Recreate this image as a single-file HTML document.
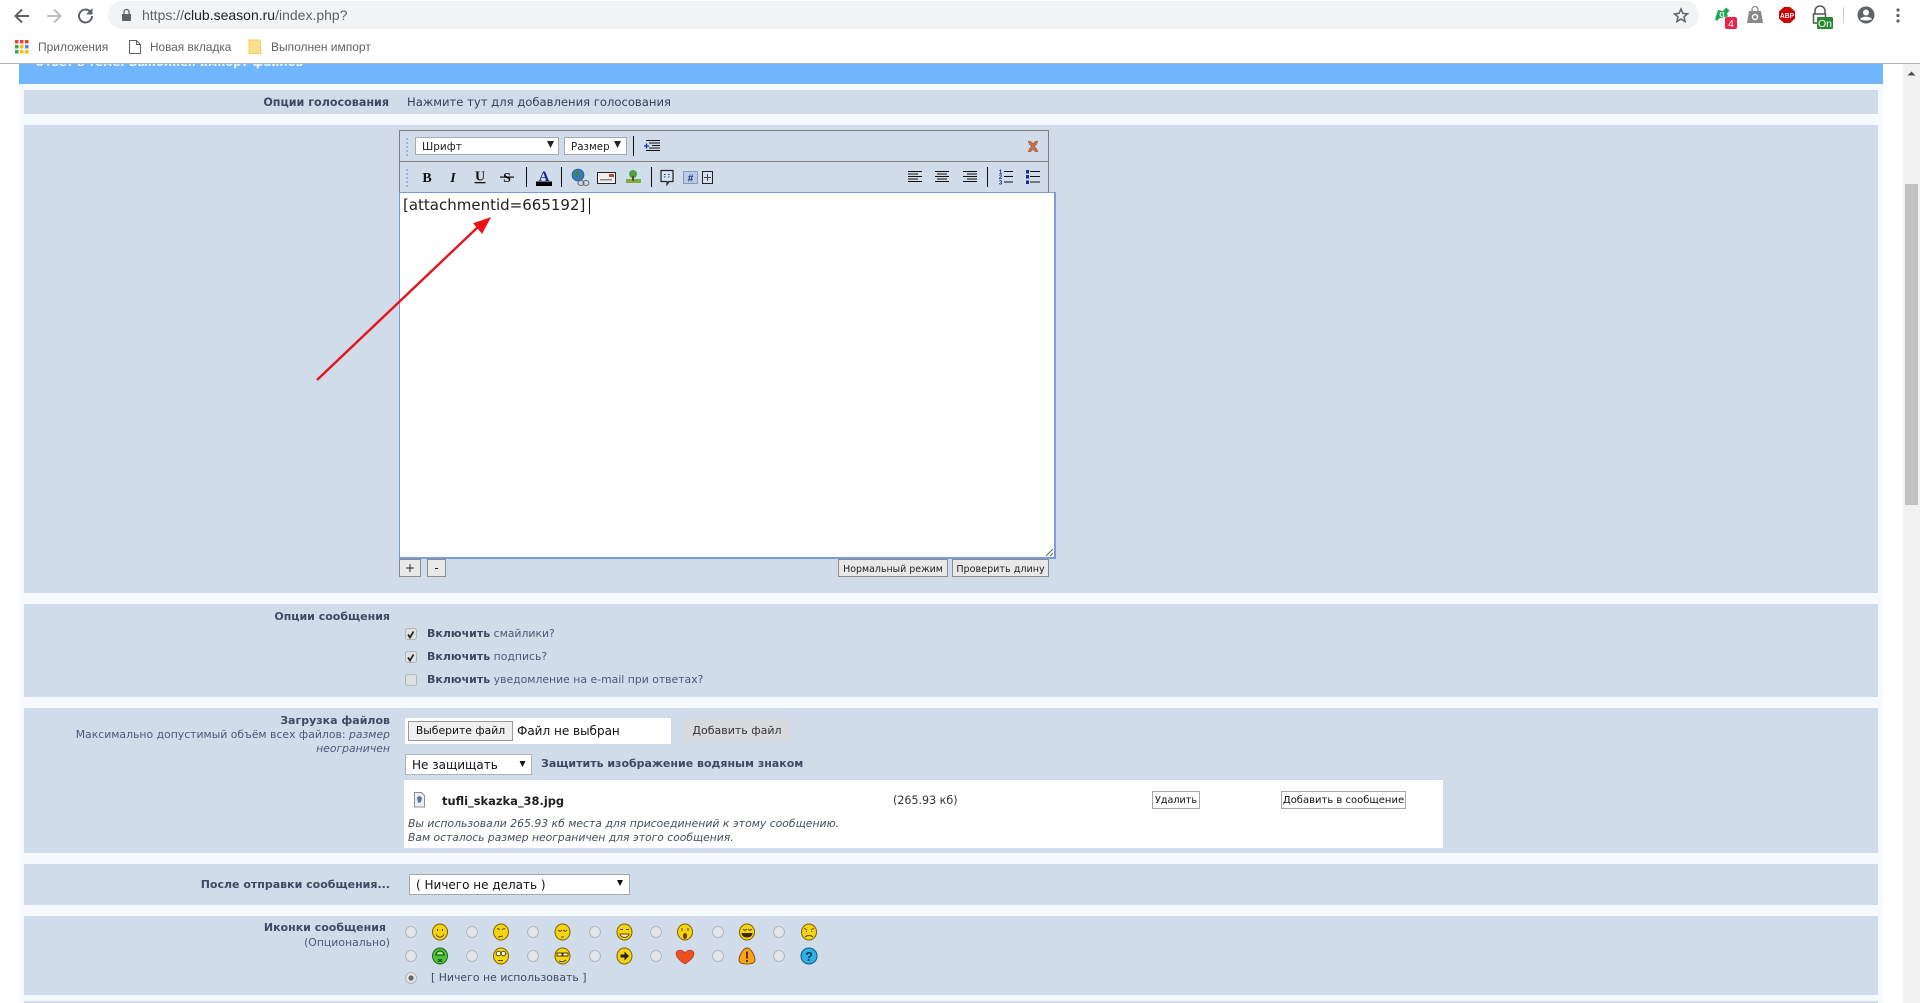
<!DOCTYPE html>
<html lang="ru"><head><meta charset="utf-8"><title>club.season.ru</title>
<style>
html,body{margin:0;padding:0;width:1920px;height:1003px;overflow:hidden;background:#fff}
body{position:relative;font-family:"DejaVu Sans","Liberation Sans",sans-serif;font-size:11px;color:#3d4a63}
.b{position:absolute}
.t{position:absolute;white-space:nowrap;line-height:14px}
.r{right:1530px;text-align:right}
.row{position:absolute;left:24px;width:1854px;background:#d1dcea}
.lb{font-weight:bold;font-size:11px;color:#3d4a63}
.ch{font-family:"Liberation Sans",sans-serif;font-size:12px;color:#5f6368}
.btn{position:absolute;box-sizing:border-box;background:#e8e8e8;border:1px solid #8c8c8c;color:#222;text-align:center;font-size:9.6px;line-height:19px;white-space:nowrap}
.wb{position:absolute;box-sizing:border-box;background:#fff;border:1px solid #a8a8a8;color:#111;text-align:center;font-size:10px;line-height:18px;white-space:nowrap}
.sel{position:absolute;box-sizing:border-box;background:#fff;border:1px solid #a9a9a9;color:#222;white-space:nowrap}
.n{font-size:10.85px;color:#4a5a78}
</style></head><body>

<!-- page background -->
<div class="b" style="left:19px;top:64px;width:1864px;height:939px;background:#f6f9fd"></div>
<div class="b" style="left:19px;top:64px;width:1864px;height:20px;background:#6fb6ff;overflow:hidden">
  <div class="t" style="left:16px;top:-9px;font-weight:bold;font-size:11.5px;color:#e8f3ff">Ответ в теме: Выполнен импорт файлов</div>
</div>

<!-- scrollbar -->
<div class="b" style="left:1903px;top:64px;width:17px;height:939px;background:#f1f1f1"></div>
<div class="b" style="left:1905px;top:184px;width:13px;height:321px;background:#c1c1c1"></div>

<!-- rows -->
<div class="row" style="top:90px;height:24px"></div>
<div class="row" style="top:125px;height:468px"></div>
<div class="row" style="top:604px;height:93px"></div>
<div class="row" style="top:708px;height:145px"></div>
<div class="row" style="top:864px;height:41px"></div>
<div class="row" style="top:916px;height:79px"></div>
<div class="row" style="top:1001px;height:2px"></div>

<!-- chrome -->
<div class="b" style="left:0;top:0;width:1920px;height:63px;background:#fff"></div>
<div class="b" style="left:0;top:63px;width:1920px;height:1px;background:#b4b4b4"></div>
<div class="b" style="left:108px;top:1px;width:1591px;height:28px;border-radius:14px;background:#f1f3f4"></div>
<div class="t" style="left:142px;top:8px;font-family:'Liberation Sans',sans-serif;font-size:14px;color:#5f6368">https://<span style="color:#202124">club.season.ru</span>/index.php?</div>
<div class="t ch" style="left:38px;top:40px">Приложения</div>
<div class="t ch" style="left:150px;top:40px;font-size:11.8px">Новая вкладка</div>
<div class="t ch" style="left:271px;top:40px">Выполнен импорт</div>

<!-- row 1 -->
<div class="t lb" style="right:1531px;top:96px;font-size:11.15px">Опции голосования</div>
<div class="t" style="left:407px;top:95px;font-size:11.6px;color:#34405a">Нажмите тут для добавления голосования</div>

<!-- editor -->
<div class="b" style="left:399px;top:130px;width:648px;height:61px;border:1px solid #808080;border-bottom:0;background:#d1dcea"></div>
<div class="b" style="left:399px;top:161px;width:649px;height:1px;background:#808080"></div>
<div class="sel" style="left:415px;top:137px;width:144px;height:18px;font-size:10.5px;line-height:18px;padding-left:6px">Шрифт</div>
<div class="sel" style="left:564px;top:137px;width:63px;height:18px;font-size:10.3px;line-height:18px;padding-left:6px">Размер</div>
<div class="b" style="left:399px;top:192px;width:657px;height:367px;box-sizing:border-box;background:#fff;border:2px solid #7a9cd6;border-width:1.5px 2px 2px 1.5px"></div>
<div class="t" style="left:403px;top:196px;font-size:15px;line-height:18px;color:#222">[attachmentid=665192]</div>
<div class="b" style="left:589px;top:198px;width:1px;height:16px;background:#111"></div>

<div class="btn" style="left:399px;top:559px;width:22px;height:18px;font-size:12px;line-height:17px">+</div>
<div class="btn" style="left:427px;top:559px;width:19px;height:18px;font-size:12px;line-height:17px">-</div>
<div class="btn" style="left:838px;top:559px;width:110px;height:18px;font-size:9.45px">Нормальный режим</div>
<div class="btn" style="left:952px;top:559px;width:97px;height:18px">Проверить длину</div>

<!-- row 3 -->
<div class="t r lb" style="top:610px">Опции сообщения</div>
<div class="t n" style="left:427px;top:627px"><b style="color:#3d4a63;font-size:11px">Включить</b> смайлики?</div>
<div class="t n" style="left:427px;top:650px"><b style="color:#3d4a63;font-size:11px">Включить</b> подпись?</div>
<div class="t n" style="left:427px;top:673px"><b style="color:#3d4a63;font-size:11px">Включить</b> уведомление на e-mail при ответах?</div>

<!-- row 4 -->
<div class="t r lb" style="top:714px">Загрузка файлов</div>
<div class="t r n" style="top:728px">Максимально допустимый объём всех файлов: <i>размер</i></div>
<div class="t r n" style="top:742px"><i>неограничен</i></div>
<div class="b" style="left:405px;top:718px;width:266px;height:26px;background:#fff"></div>
<div class="btn" style="left:408px;top:721px;width:105px;height:20px;background:#efefef;border-color:#9a9a9a;font-size:10.8px;line-height:18px;color:#111">Выберите файл</div>
<div class="t" style="left:517px;top:724px;font-size:12px;color:#111">Файл не выбран</div>
<div class="b" style="left:684px;top:719px;width:106px;height:23px;background:#d9dade;color:#333;text-align:center;font-size:11px;line-height:24px">Добавить файл</div>
<div class="sel" style="left:405px;top:754px;width:127px;height:21px;font-size:12px;line-height:21px;padding-left:6px;border-color:#b0b4ba;color:#111">Не защищать</div>
<div class="t lb" style="left:541px;top:757px">Защитить изображение водяным знаком</div>
<div class="b" style="left:404px;top:780px;width:1039px;height:68px;background:#fff"></div>
<div class="t" style="left:442px;top:794px;font-weight:bold;font-size:11.45px;color:#222">tufli_skazka_38.jpg</div>
<div class="t" style="left:893px;top:794px;font-size:11.1px;color:#333">(265.93 кб)</div>
<div class="t" style="left:408px;top:817px;font-size:10.84px;font-style:italic;color:#444f60">Вы использовали 265.93 кб места для присоединений к этому сообщению.</div>
<div class="t" style="left:408px;top:831px;font-size:10.75px;font-style:italic;color:#444f60">Вам осталось размер неограничен для этого сообщения.</div>
<div class="wb" style="left:1152px;top:791px;width:48px;height:18px;font-size:9.6px">Удалить</div>
<div class="wb" style="left:1281px;top:791px;width:125px;height:18px">Добавить в сообщение</div>

<!-- row 5 -->
<div class="t r lb" style="top:878px">После отправки сообщения...</div>
<div class="sel" style="left:409px;top:874px;width:221px;height:21px;font-size:12px;line-height:20px;padding-left:6px;color:#111">( Ничего не делать )</div>

<!-- row 6 -->
<div class="t lb" style="right:1534px;top:921px">Иконки сообщения</div>
<div class="t r n" style="top:936px">(Опционально)</div>
<div class="t" style="left:431px;top:971px;font-size:10.9px;color:#3d4a63">[ Ничего не использовать ]</div>

<!-- vector overlay -->
<svg class="b" style="left:0;top:0" width="1920" height="1003" viewBox="0 0 1920 1003" fill="none">
<defs>
 <g id="rd"><circle r="5.5" fill="#e3e5e8" stroke="#b4b7bb"/></g>
 <g id="fc"><ellipse rx="7.5" ry="8" fill="#f7d312" stroke="#7a6200" stroke-width="1"/></g>
</defs>
<!-- chrome nav -->
<g stroke="#5f6368" stroke-width="2" fill="none">
 <path d="M29 16H16M22 9.5L15.5 16l6.500 6.500"/>
 <path d="M47 16H60M54 9.5L60.500 16l-6.500 6.500" stroke="#bcc0c4"/>
 <path d="M92 16a6.500 6.500 0 1 1-2-4.700" /></g>
<path d="M92.500 8v6.500H86z" fill="#5f6368"/>
<path d="M122 14h9v7h-9z" fill="#5f6368"/><path d="M124 14v-2a2.500 2.500 0 0 1 5 0v2" stroke="#5f6368" stroke-width="1.300"/>
<path d="M1681 9l1.900 4.400 4.600.400-3.500 3 1 4.700-4-2.500-4 2.500 1-4.700-3.500-3 4.600-.400z" stroke="#5f6368" stroke-width="1.500"/>
<!-- extensions -->
<path d="M1715 19l3-9 5 1 3-3.500 3.500 3-2.500 3 1 3-5 1-4 1-2 2.500z" fill="#1fa653"/>
<text x="1722" y="17" font-family="Liberation Sans" font-size="9" font-weight="bold" fill="#d8f5e2" text-anchor="middle">q</text>
<rect x="1725" y="17" width="12" height="12" rx="2" fill="#e9234b"/><text x="1731" y="27" font-family="Liberation Sans" font-size="10" fill="#fff" text-anchor="middle">4</text>
<path d="M1749 11h12l2 12h-16z" fill="#8a8a8a"/><path d="M1752 11v-1.500a3 3 0 0 1 6 0V11" stroke="#8a8a8a" stroke-width="1.300"/><circle cx="1755" cy="17" r="2.500" stroke="#fff" stroke-width="1.400"/>
<path d="M1784 7h6l5 4.500v7l-5 4.500h-6l-5-4.500v-7z" fill="#c00"/><text x="1787" y="18" font-family="Liberation Sans" font-size="7.500" font-weight="bold" fill="#fff" text-anchor="middle" textLength="14" lengthAdjust="spacingAndGlyphs">ABP</text>
<path d="M1815 14v-3a5 5 0 0 1 10 0v3" stroke="#555" stroke-width="1.500"/><rect x="1813.500" y="14" width="12" height="9" fill="#fff" stroke="#555" stroke-width="1.500"/>
<rect x="1817" y="17" width="16" height="12" rx="1" fill="#2a8a32"/><text x="1825" y="27" font-family="Liberation Sans" font-size="10.500" fill="#fff" text-anchor="middle">On</text>
<rect x="1843" y="7" width="1" height="16" fill="#ccc"/>
<circle cx="1866" cy="15" r="8.500" fill="#5f6368"/><circle cx="1866" cy="12.500" r="3" fill="#fff"/><path d="M1860 19c2-3 10-3 12 0-2 2-10 2-12 0z" fill="#fff"/>
<g fill="#5f6368"><circle cx="1898" cy="10" r="1.600"/><circle cx="1898" cy="15.500" r="1.600"/><circle cx="1898" cy="21" r="1.600"/></g>
<!-- bookmarks -->
<g><path fill="#ea4335" d="M15 40h3.500v3.500H15zM20 40h3.500v3.500H20zM25 40h3.500v3.500H25z"/><path fill="#34a853" d="M15 45h3.500v3.500H15zM15 50h3.500v3.500H15z"/><path fill="#fbbc05" d="M20 45h3.500v3.500H20zM25 50h3.500v3.500H25zM20 50h3.500v3.500H20z"/><path fill="#4285f4" d="M25 45h3.500v3.500H25z"/></g>
<path d="M129.500 40.500h7l4 4v9h-11zM136.500 40.500v4h4" stroke="#5f6368" fill="#fff"/>
<path d="M249 40h10l1.500 2v11.500H249z" fill="#fbe08a" stroke="#f3cd60"/>
<path d="M1911.500 71.500l-4 4h8z" fill="#505050"/>
<!-- toolbar 1 -->
<g fill="#9fb3da"><rect x="406" y="138" width="2" height="2"/><rect x="406" y="142" width="2" height="2"/><rect x="406" y="146" width="2" height="2"/><rect x="406" y="150" width="2" height="2"/><rect x="406" y="154" width="2" height="2"/>
<rect x="406" y="169" width="2" height="2"/><rect x="406" y="173" width="2" height="2"/><rect x="406" y="177" width="2" height="2"/><rect x="406" y="181" width="2" height="2"/><rect x="406" y="185" width="2" height="2"/></g>
<path d="M547 141h7l-3.500 7zM614 141h7l-3.500 7z" fill="#222"/>
<rect x="633" y="136" width="1" height="20" fill="#111"/>
<path d="M646 140.500h14M649 143h11M652 145.500h8M649 148h11M646 150.500h14" stroke="#111" stroke-width="1.100"/><path d="M644 146h5M646.500 143.500v5" stroke="#1a2fa0" stroke-width="1.300"/>
<path d="M1028 141l3 .5 2 2 2-2 3-.5-1.500 3.500-2 2 2 2 1.500 3.500-3-.5-2-2-2 2-3 .5 1.500-3.500 2-2-2-2z" fill="#c4704a" stroke="#96583a" stroke-width=".5"/>
<!-- toolbar 2 -->
<g font-family="Liberation Serif" font-size="14" fill="#111" text-anchor="middle">
 <text x="427" y="182" font-weight="bold">B</text>
 <text x="453" y="182" font-weight="bold" font-style="italic">I</text>
 <text x="480" y="180.500" font-weight="bold">U</text>
 <text x="507" y="182" font-weight="bold">S</text>
 <text x="544" y="181" font-weight="bold" fill="#1c2c80" font-size="15">A</text>
</g>
<rect x="474.500" y="182" width="11" height="1.300" fill="#111"/>
<rect x="500" y="176.500" width="14" height="1.200" fill="#111"/>
<rect x="536" y="181.500" width="16" height="4.500" fill="#000"/>
<g fill="#111"><rect x="526" y="167" width="1" height="20"/><rect x="561" y="167" width="1" height="20"/><rect x="651" y="167" width="1" height="20"/><rect x="987" y="167" width="1" height="20"/></g>
<circle cx="578" cy="175" r="6" fill="#3a78c4" stroke="#244a80" stroke-width=".6"/><path d="M574 172l4-1 1 3-3 4zM580 176l2-2 1 3z" fill="#3c8a3c"/>
<path d="M578 183a3 2.500 0 0 1 6 0 3 2.500 0 0 1-6 0zM583 183a3 2.500 0 0 1 6 0 3 2.500 0 0 1-6 0z" stroke="#666" stroke-width="1"/>
<rect x="597.500" y="172.500" width="18" height="11" fill="#eee" stroke="#222"/><rect x="609" y="174" width="5" height="3" fill="#b04840"/><rect x="600" y="179" width="12" height="1.500" fill="#888"/>
<rect x="626" y="169" width="15" height="14" fill="#c6e4f0"/><rect x="626" y="179" width="15" height="4" fill="#7ab040"/><circle cx="633" cy="174" r="4" fill="#5a9a40"/><rect x="632" y="176" width="2" height="5" fill="#6b4b20"/>
<path d="M661 170.500h12v11h-4l-2 3v-3h-6z" fill="#d6e3f5" stroke="#222" stroke-width="1.200"/><path d="M664 174.500h1.500M664 177h1.500M668 174.500h1.500M668 177h1.500" stroke="#1a3a90"/>
<rect x="683.500" y="171.500" width="14" height="12" fill="#b9cbe6" stroke="#8a9bb8"/><text x="690.500" y="181.500" font-family="Liberation Sans" font-size="10" font-weight="bold" fill="#1a2f7a" text-anchor="middle">#</text>
<rect x="702.500" y="171.500" width="10" height="12" stroke="#222" fill="#d6e0ee"/><path d="M704 177.500h7M707.500 174v7" stroke="#445"/>
<g stroke="#111" stroke-width="1"><path d="M908 171.500h14M908 174h10M908 176.500h14M908 179h10M908 181.500h14"/><path d="M935 171.500h14M937 174h10M935 176.500h14M937 179h10M935 181.500h14"/><path d="M963 171.500h14M967 174h10M963 176.500h14M967 179h10M963 181.500h14"/><path d="M1004 171.500h9M1004 176.500h9M1004 182h9"/></g>
<g fill="#1a2a90" font-family="Liberation Sans" font-size="6" font-weight="bold" text-anchor="middle"><text x="1000.500" y="174">1</text><text x="1000.500" y="179">2</text><text x="1000.500" y="184.500">3</text></g>
<g fill="#1a2a90"><rect x="1026" y="170" width="3" height="3.500"/><rect x="1026" y="175" width="3" height="3.500"/><rect x="1026" y="180.500" width="3" height="3.500"/></g>
<path d="M1030 171.500h10M1030 176.500h10M1030 182h10" stroke="#111"/>
<!-- resize grip -->
<path d="M1053 549l-7 7M1053 553l-3 3" stroke="#666"/>
<!-- red arrow -->
<path d="M317 380L479 226" stroke="#e4141c" stroke-width="2.400"/>
<path d="M490 218L474 223.500 482 233z" fill="#ee1118" stroke="#ee1118"/>
<!-- checkboxes -->
<g stroke="#b5b5b5" fill="#dfe0e3"><rect x="405.500" y="628.500" width="11" height="11" rx="2"/><rect x="405.500" y="651.500" width="11" height="11" rx="2"/><rect x="405.500" y="674.500" width="11" height="11" rx="2"/></g>
<path d="M408 634.500l2 3 3.500-6M408 657.500l2 3 3.500-6" stroke="#222" stroke-width="1.700"/>
<!-- select arrows -->
<path d="M519.500 761h6l-3 6zM617 880h6l-3 6z" fill="#111"/>
<!-- file icon -->
<path d="M414.500 792.500h7l3 3v11.500h-10z" fill="#eceef0" stroke="#8f8f8f"/><path d="M417 797l3-1 2 2-1 4-3 1z" fill="#5a72a8"/>
<!-- radios -->
<use href="#rd" x="411" y="932"/><use href="#rd" x="472" y="932"/><use href="#rd" x="533" y="932"/><use href="#rd" x="595" y="932"/><use href="#rd" x="656" y="932"/><use href="#rd" x="718" y="932"/><use href="#rd" x="779" y="932"/>
<use href="#rd" x="411" y="956"/><use href="#rd" x="472" y="956"/><use href="#rd" x="533" y="956"/><use href="#rd" x="595" y="956"/><use href="#rd" x="656" y="956"/><use href="#rd" x="718" y="956"/><use href="#rd" x="779" y="956"/>
<use href="#rd" x="411" y="978"/><circle cx="411" cy="978" r="2.600" fill="#666"/>
<!-- row 1 smileys -->
<use href="#fc" x="440" y="932"/><path d="M436 934.500c2 3.500 6 3.500 8 0M437.500 929v2M442.500 929v2" stroke="#5a4a00"/>
<use href="#fc" x="501" y="932"/><path d="M497 928.500l3 1M505 928.500l-3 1M498 937l5-1" stroke="#5a4a00"/>
<use href="#fc" x="562.500" y="932"/><path d="M558 930l2 1.500 2-1.500M563 930l2 1.500 2-1.500M561 937h3" stroke="#5a4a00"/>
<use href="#fc" x="624.500" y="932"/><path d="M620 929.500h3M626 929.500h3M620 934h9c-1 4.500-8 4.500-9 0z" stroke="#5a4a00" fill="#fff2b0"/>
<use href="#fc" x="685" y="932"/><ellipse cx="685" cy="936" rx="2" ry="3" fill="#6a3a00"/><path d="M682 928v3M688 928v3" stroke="#5a4a00"/>
<use href="#fc" x="747" y="932"/><path d="M741.500 933h11c0 6-11 6-11 0z" fill="#3a2a00"/><path d="M743 929l2 1.500 2-1.500M748 929l2 1.500 2-1.500" stroke="#5a4a00"/>
<use href="#fc" x="809" y="932"/><path d="M804 928l3 2M814 928l-3 2M805 937c2-2 6-2 8 0M806 931.500h1M811 931.500h1" stroke="#5a4a00"/>
<!-- row 2 smileys -->
<ellipse cx="440" cy="956" rx="7.500" ry="8" fill="#4fc23a" stroke="#1a6a18"/><path d="M436 955a4 4 0 0 1 8 0zM438 959l4 3M442 959l-4 3" stroke="#0c3c0c" fill="#9ee48a"/>
<use href="#fc" x="501" y="956"/><circle cx="498.500" cy="953.500" r="2.300" fill="#fff" stroke="#5a4a00"/><circle cx="503.500" cy="953.500" r="2.300" fill="#fff" stroke="#5a4a00"/><path d="M498 960.500h5" stroke="#5a4a00"/>
<use href="#fc" x="562.500" y="956"/><path d="M557 953h5v3h-5zM563 953h5v3h-5zM559 961c2 1 5 1 7-1" stroke="#4a3a00" fill="#fff7c0"/>
<use href="#fc" x="624.500" y="956"/><path d="M620.500 954.500h4v-3l4.500 4.500-4.500 4.500v-3h-4z" fill="#222"/>
<path d="M685 964c-12-7-10-14-5-14 3 0 5 3 5 3s2-3 5-3c5 0 7 7-5 14z" fill="#ec5020" stroke="#b03010" stroke-width=".6"/>
<path d="M747 948c4 0 8 8 8 12 0 3-3 4-8 4s-8-1-8-4c0-4 4-12 8-12z" fill="#f8a418" stroke="#8a5000"/><rect x="746" y="951.500" width="2" height="7" fill="#6a2a00"/><rect x="746" y="960" width="2" height="2" fill="#6a2a00"/>
<circle cx="809" cy="956" r="8" fill="#30b0e4" stroke="#0a5a80"/><text x="809" y="961" font-family="Liberation Sans" font-size="13" font-weight="bold" fill="#0a3a60" text-anchor="middle">?</text>
</svg>
</body></html>
